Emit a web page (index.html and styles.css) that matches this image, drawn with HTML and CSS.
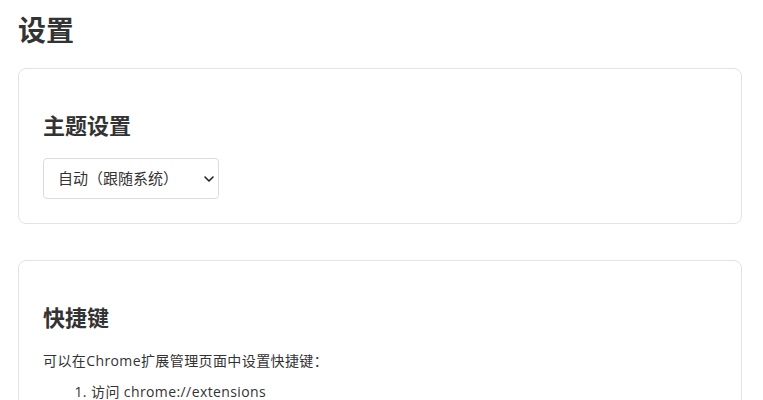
FILE: index.html
```html
<!DOCTYPE html>
<html lang="zh-CN">
<head>
<meta charset="utf-8">
<title>设置</title>
<link rel="stylesheet" href="styles.css">
</head>
<body>
<h1 class="page-title">设置</h1>
<section class="card">
  <h2 class="card-title">主题设置</h2>
  <div class="select-wrap">
    <select class="select">
      <option>自动（跟随系统）</option>
      <option>浅色</option>
      <option>深色</option>
    </select>
    <svg class="chevron" width="10" height="6" viewBox="0 0 10 6" aria-hidden="true"><path d="M1 1l4 4 4-4" fill="none" stroke="#222" stroke-width="1.6" stroke-linecap="round" stroke-linejoin="round"/></svg>
  </div>
</section>
<section class="card">
  <h2 class="card-title">快捷键</h2>
  <p class="text">可以在Chrome扩展管理页面中设置快捷键：</p>
  <ol class="steps">
    <li>访问 chrome://extensions</li>
  </ol>
</section>
</body>
</html>
```

FILE: styles.css
```css
html, body {
  margin: 0;
  padding: 0;
  background: #fff;
}
body {
  padding: 0 21px 0 18px;
  font-family: "Open Sans", "Noto Sans CJK SC", sans-serif;
  color: #333;
}
.page-title {
  font-size: 28px;
  line-height: 1.3;
  font-weight: 700;
  margin: 12px 0 20px;
  color: #333;
}
.card {
  border: 1px solid #e3e3e3;
  border-radius: 8px;
  padding: 24px;
  margin: 0 0 36px;
}
.card-title {
  font-size: 22px;
  line-height: 1.3;
  font-weight: 700;
  margin: 18px 0 18px;
  color: #333;
}
.select-wrap {
  position: relative;
  width: 176px;
}
.select {
  appearance: none;
  -webkit-appearance: none;
  display: block;
  width: 176px;
  height: 41px;
  box-sizing: border-box;
  padding: 0 30px 0 14px;
  border: 1px solid #dcdcdc;
  border-radius: 4px;
  background: #fff;
  font-family: "Open Sans", "Noto Sans CJK SC", sans-serif;
  font-size: 15px;
  color: #333;
}
.chevron {
  position: absolute;
  left: 161px;
  top: 18px;
  pointer-events: none;
}
.text {
  font-size: 14px;
  line-height: 1.5;
  letter-spacing: 0.4px;
  margin: 0 0 10px;
  color: #333;
}
.steps {
  font-size: 14px;
  line-height: 1.5;
  letter-spacing: 0.4px;
  margin: 10px 0 0;
  padding-left: 48px;
  color: #333;
}
.steps li {
  margin-bottom: 6px;
}
```
